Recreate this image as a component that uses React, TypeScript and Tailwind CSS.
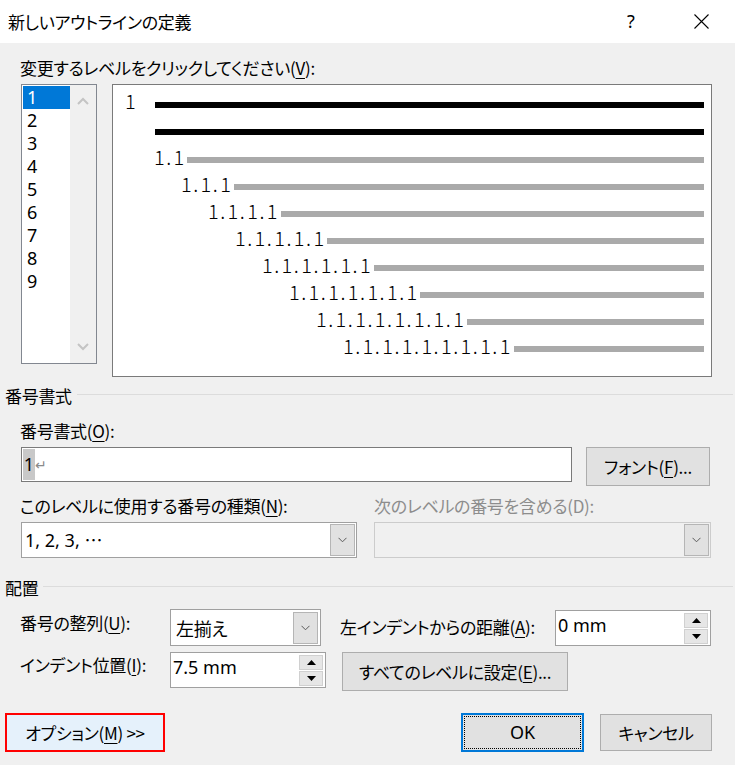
import React from "react";

const JP = "font-['Noto_Sans_CJK_JP',sans-serif] [font-feature-settings:'palt'] tracking-[-0.3px]";
const LAT = "font-['Noto_Sans','Noto_Sans_CJK_JP',sans-serif] tracking-normal";

function U({ children }: { children: React.ReactNode }) {
  return <span className="underline underline-offset-[3px] decoration-1">{children}</span>;
}

function Chevron() {
  return (
    <svg width="9" height="6" viewBox="0 0 9 6">
      <path d="M0.5 0.8 L4.5 4.8 L8.5 0.8" fill="none" stroke="#5a5a5a" strokeWidth="1" />
    </svg>
  );
}

function DropBtn() {
  return (
    <div className="w-[25px] h-[32px] bg-[#e1e1e1] border border-[#b5b5b5] flex items-center justify-center">
      <Chevron />
    </div>
  );
}

function Tri({ up }: { up?: boolean }) {
  return (
    <svg width="9" height="5" viewBox="0 0 9 5">
      {up ? <path d="M0 5 L4.5 0 L9 5 Z" fill="#000" /> : <path d="M0 0 L4.5 5 L9 0 Z" fill="#000" />}
    </svg>
  );
}

function Spin({ value }: { value: string }) {
  return (
    <div className="flex h-[36px] w-[156px] border border-[#a0a0a0] bg-white">
      <div className={`flex-1 flex items-center pl-[2px] pb-[5px] text-[18px] ${LAT}`}>{value}</div>
      <div className="flex flex-col pt-[2px] pr-[2px] gap-[1px]">
        <div className="w-[24px] h-[15px] bg-[#e6e6e6] border border-[#d0d0d0] flex items-center justify-center">
          <Tri up />
        </div>
        <div className="w-[24px] h-[15px] bg-[#e6e6e6] border border-[#d0d0d0] flex items-center justify-center">
          <Tri />
        </div>
      </div>
    </div>
  );
}

function Header({ children }: { children: React.ReactNode }) {
  return (
    <div className="flex items-center h-[20px] pl-[5px] pr-[2px]">
      <span className="leading-[20px]">{children}</span>
      <div className="flex-1 h-px bg-[#dcdcdc] ml-[5px] -mt-[3px]" />
    </div>
  );
}

const levels = [
  "1.1",
  "1.1.1",
  "1.1.1.1",
  "1.1.1.1.1",
  "1.1.1.1.1.1",
  "1.1.1.1.1.1.1",
  "1.1.1.1.1.1.1.1",
  "1.1.1.1.1.1.1.1.1",
];

function PvText({ t }: { t: string }) {
  return (
    <span className="flex font-['Noto_Sans_CJK_JP',sans-serif] font-light text-[20px] leading-[27px] tracking-normal [font-feature-settings:normal]">
      {t.split("").map((c, i) => (
        <span key={i} className="inline-block w-[9.8px] text-center">
          {c}
        </span>
      ))}
    </span>
  );
}

export default function App() {
  return (
    <div className={`w-[735px] h-[765px] bg-[#f0f0f0] overflow-hidden text-black text-[17px] ${JP}`}>
      {/* title bar */}
      <div className="h-[43px] bg-white flex items-center">
        <div className="pl-[8px] leading-[24px]">新しいアウトラインの定義</div>
        <div className="ml-auto flex items-center pr-[11px] gap-[24px]">
          <div className={`w-[46px] flex justify-center text-[18px] ${LAT}`}>?</div>
          <div className="w-[46px] flex justify-center">
            <svg width="15" height="15" viewBox="0 0 15 15">
              <path d="M0.5 0.5 L14.5 14.5 M14.5 0.5 L0.5 14.5" stroke="#000" strokeWidth="1.1" />
            </svg>
          </div>
        </div>
      </div>

      {/* label V */}
      <div className="mt-[13px] pl-[20px] leading-[24px]">
        変更するレベルをクリックしてください(<U>V</U>):
      </div>

      {/* list + preview */}
      <div className="mt-[4px] pl-[21px] flex items-start gap-[15px]">
        <div className="w-[76px] h-[280px] border border-[#828790] bg-white flex">
          <div className="w-[48px] pl-[1px] pt-[1px]">
            {["1", "2", "3", "4", "5", "6", "7", "8", "9"].map((n, i) => (
              <div
                key={n}
                className={`h-[23px] leading-[23px] pl-[4px] text-[18px] ${LAT} ${
                  i === 0 ? "bg-[#0078d7] text-white" : ""
                }`}
              >
                {n}
              </div>
            ))}
          </div>
          <div className="w-[26px] h-full bg-[#f0f0f0] flex flex-col items-center justify-between py-[12px]">
            <svg width="12" height="8" viewBox="0 0 12 8">
              <path d="M1 7 L6 2 L11 7" fill="none" stroke="#c4c4c4" strokeWidth="2" />
            </svg>
            <svg width="12" height="8" viewBox="0 0 12 8">
              <path d="M1 1 L6 6 L11 1" fill="none" stroke="#c4c4c4" strokeWidth="2" />
            </svg>
          </div>
        </div>

        <div className="w-[600px] h-[293px] border border-[#7a7a7a] bg-white pt-[6px]">
          <div className="flex items-center h-[27px] pl-[12px] pr-[7px]">
            <span className="w-[30px] -mt-[8px]">
              <PvText t="1" />
            </span>
            <div className="flex-1 h-[6px] bg-black" />
          </div>
          <div className="flex items-center h-[27px] pl-[42px] pr-[7px]">
            <div className="flex-1 h-[6px] bg-black" />
          </div>
          {levels.map((t, i) => (
            <div
              key={t}
              className="flex items-center h-[27px] pr-[7px]"
              style={{ paddingLeft: 41 + i * 27 }}
            >
              <span className="-mt-[5px]">
                <PvText t={t} />
              </span>
              <div className="flex-1 h-[6px] bg-[#aaaaaa] ml-[4px] mt-[2px]" />
            </div>
          ))}
        </div>
      </div>

      {/* 番号書式 */}
      <div className="mt-[9px]">
        <Header>番号書式</Header>
      </div>
      <div className="mt-[13px] pl-[20px] leading-[24px]">
        番号書式(<U>O</U>):
      </div>
      <div className="mt-[4px] pl-[21px] flex items-start gap-[14px]">
        <div className="w-[551px] h-[35px] border border-[#7a7a7a] bg-white flex items-stretch py-[1px] pl-[1px]">
          <div className={`bg-[#c8c8c8] w-[12px] flex items-center justify-center text-[18px] ${LAT}`}>1</div>
          <div className={`flex items-center text-[#8a8a8a] text-[14px] ${LAT}`}>↵</div>
        </div>
        <div className="w-[124px] h-[39px] bg-[#e1e1e1] border border-[#adadad] flex items-center justify-center leading-[24px]">
          フォント(<U>F</U>)...
        </div>
      </div>

      <div className="mt-[8px] flex leading-[24px]">
        <div className="pl-[20px] w-[374px]">
          このレベルに使用する番号の種類(<U>N</U>):
        </div>
        <div className="text-[#8d8d8d]">次のレベルの番号を含める(D):</div>
      </div>
      <div className="mt-[4px] pl-[21px] flex gap-[17px]">
        <div className="w-[336px] h-[36px] border border-[#a0a0a0] bg-white flex items-center pr-[1px]">
          <div className={`flex-1 pl-[3px] text-[18px] ${LAT}`}>
            1, 2, 3, <span className="font-['Noto_Sans_CJK_JP',sans-serif]">…</span>
          </div>
          <DropBtn />
        </div>
        <div className="w-[337px] h-[36px] border border-[#cccccc] bg-[#f0f0f0] flex items-center justify-end pr-[1px]">
          <DropBtn />
        </div>
      </div>

      {/* 配置 */}
      <div className="mt-[20px]">
        <Header>配置</Header>
      </div>
      <div className="mt-[11px] pl-[20px] flex items-center">
        <div className="w-[150px] leading-[24px] -mt-[10px]">
          番号の整列(<U>U</U>):
        </div>
        <div className="w-[151px] h-[37px] border border-[#a0a0a0] bg-white flex items-center pr-[2px]">
          <div className="flex-1 pl-[5px] leading-[24px] text-[18px]">左揃え</div>
          <DropBtn />
        </div>
        <div className="ml-[19px] w-[215px] leading-[24px] -mt-[2px]">
          左インデントからの距離(<U>A</U>):
        </div>
        <Spin value="0 mm" />
      </div>
      <div className="mt-[6px] pl-[20px] flex items-start">
        <div className="w-[150px] leading-[24px] mt-[1px]">
          インデント位置(<U>I</U>):
        </div>
        <Spin value="7.5 mm" />
        <div className="ml-[16px] w-[226px] h-[39px] bg-[#e1e1e1] border border-[#adadad] flex items-center justify-center leading-[24px]">
          すべてのレベルに設定(<U>E</U>)...
        </div>
      </div>

      {/* bottom buttons */}
      <div className="mt-[22px] pl-[5px] flex items-start">
        <div className="w-[160px] h-[39px] border-2 border-[#ff0000] bg-[#e5f1fb] flex items-center justify-center leading-[24px]">
          オプション(<U>M</U>) &gt;&gt;
        </div>
        <div className="ml-[296px] w-[123px] h-[39px] border-2 border-[#0078d7] bg-[#e1e1e1] p-[1px] flex">
          <div className={`flex-1 border border-dotted border-black flex items-center justify-center text-[18px] ${LAT}`}>
            OK
          </div>
        </div>
        <div className="ml-[16px] mt-[1px] w-[112px] h-[37px] bg-[#e1e1e1] border border-[#adadad] flex items-center justify-center leading-[24px]">
          キャンセル
        </div>
      </div>
    </div>
  );
}
